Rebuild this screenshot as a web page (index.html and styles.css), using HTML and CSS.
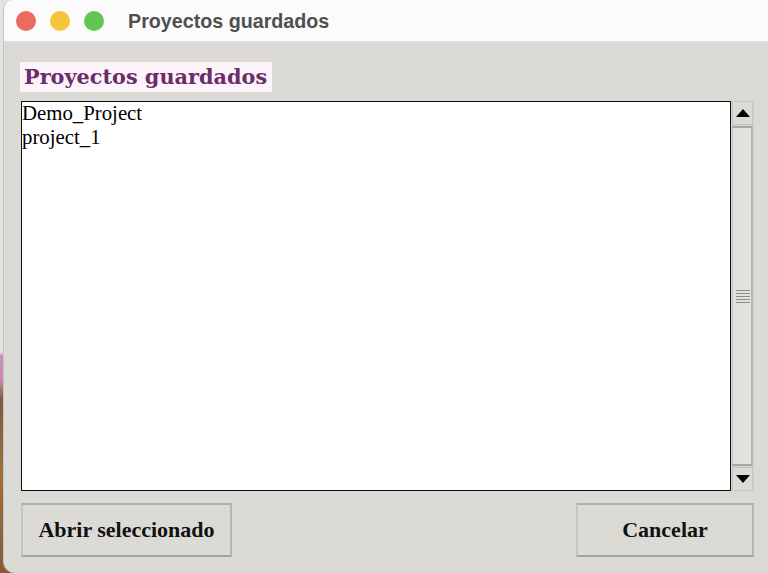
FILE: index.html
```html
<!DOCTYPE html>
<html lang="es">
<head>
<meta charset="utf-8">
<title>Proyectos guardados</title>
<link rel="stylesheet" href="styles.css">
</head>
<body>
<div class="screen">
  <div class="window">
    <div class="titlebar">
      <div class="lights">
        <span class="light red"></span>
        <span class="light yellow"></span>
        <span class="light green"></span>
      </div>
      <div class="title">Proyectos guardados</div>
    </div>
    <div class="content">
      <div class="heading-row"><span class="heading">Proyectos guardados</span></div>
      <div class="list-row">
        <div class="listbox">
          <div class="item">Demo_Project</div>
          <div class="item">project_1</div>
        </div>
        <div class="scrollbar">
          <div class="arrow up"><svg width="14" height="8" viewBox="0 0 14 8"><path d="M0 8 L7 0 L14 8 Z" fill="#000"/></svg></div>
          <div class="slider">
            <div class="grip"><i></i><i></i><i></i><i></i><i></i></div>
          </div>
          <div class="arrow down"><svg width="14" height="8" viewBox="0 0 14 8"><path d="M0 0 L7 8 L14 0 Z" fill="#000"/></svg></div>
        </div>
      </div>
      <div class="buttons">
        <button class="btn open">Abrir seleccionado</button>
        <button class="btn cancel">Cancelar</button>
      </div>
    </div>
  </div>
</div>
</body>
</html>
```
FILE: styles.css
```css
html, body {
  margin: 0;
  padding: 0;
}
body {
  width: 768px;
  height: 573px;
  overflow: hidden;
}
.screen {
  width: 768px;
  height: 573px;
  display: flex;
  background: linear-gradient(to bottom, #e4e4e4 0px, #e4e4e4 352px, #d48cbc 356px, #c88aa8 380px, #7a5a3e 400px, #a0703e 470px, #8a5a36 573px);
}
.window {
  margin-left: 3px;
  flex: 1;
  display: flex;
  flex-direction: column;
  background: #dcdad5;
  border-radius: 10px 0 0 12px;
  border-left: 1px solid #c4c4c4;
  overflow: hidden;
}
.titlebar {
  height: 41px;
  flex: none;
  display: flex;
  align-items: center;
  background: #fbfbfb;
  border-bottom: 1px solid #e2e2e0;
}
.lights {
  display: flex;
  gap: 14px;
  margin-left: 12px;
}
.light {
  width: 20px;
  height: 20px;
  border-radius: 50%;
  display: block;
}
.red { background: #ec6a5f; }
.yellow { background: #f4c43b; }
.green { background: #62c554; }
.title {
  margin-left: 24px;
  font-family: "Liberation Sans", Arial, sans-serif;
  font-weight: bold;
  font-size: 19.7px;
  color: #4f4f4f;
  padding-top: 1px;
}
.content {
  flex: 1;
  display: flex;
  flex-direction: column;
  padding: 20px 14px 16px 16px;
}
.heading-row {
  display: flex;
}
.heading {
  background: #fcf3fb;
  color: #6a2c6a;
  font-family: "DejaVu Serif", Georgia, serif;
  font-weight: bold;
  font-size: 20.8px;
  height: 30px;
  line-height: 30px;
  padding: 0 5px 0 4px;
}
.list-row {
  margin-top: 9px;
  margin-left: 1px;
  height: 390px;
  display: flex;
}
.listbox {
  flex: 1;
  background: #ffffff;
  border: 1.5px solid #111111;
  padding: 0;
  font-family: "Liberation Serif", Georgia, serif;
  font-size: 20.8px;
  color: #000;
}
.item {
  height: 24px;
  line-height: 22px;
}
.scrollbar {
  width: 21px;
  flex: none;
  display: flex;
  flex-direction: column;
  background: #d4d2cd;
  padding: 0 1px 0 1px;
}
.arrow {
  height: 22px;
  flex: none;
  display: flex;
  align-items: center;
  justify-content: center;
  background: #dcdad5;
  border: 1px solid #c8c6c1;
}
.slider {
  flex: 1;
  margin: 1px 0;
  background: #e3e1dd;
  border-left: 1px solid #c9c7c3;
  border-right: 2px solid #b7b5b0;
  border-top: 2px solid #a8a6a1;
  border-bottom: 2px solid #a8a6a1;
  display: flex;
  align-items: center;
  justify-content: center;
}
.grip {
  display: flex;
  flex-direction: column;
  gap: 2px;
  margin-left: 1px;
}
.grip i {
  display: block;
  width: 14px;
  height: 1px;
  background: #8e8c88;
}
.buttons {
  margin-top: 12px;
  margin-left: 1px;
  display: flex;
  justify-content: space-between;
}
.btn {
  height: 54px;
  background: #dcdad5;
  border-top: 2px solid #b0aeaa;
  border-left: 2px solid #c6c4c0;
  border-right: 2px solid #b8b6b2;
  border-bottom: 2px solid #a6a4a0;
  font-family: "Liberation Serif", Georgia, serif;
  font-weight: bold;
  font-size: 22px;
  color: #111;
  padding: 0;
}
.open { width: 211px; }
.cancel { width: 178px; }
```
